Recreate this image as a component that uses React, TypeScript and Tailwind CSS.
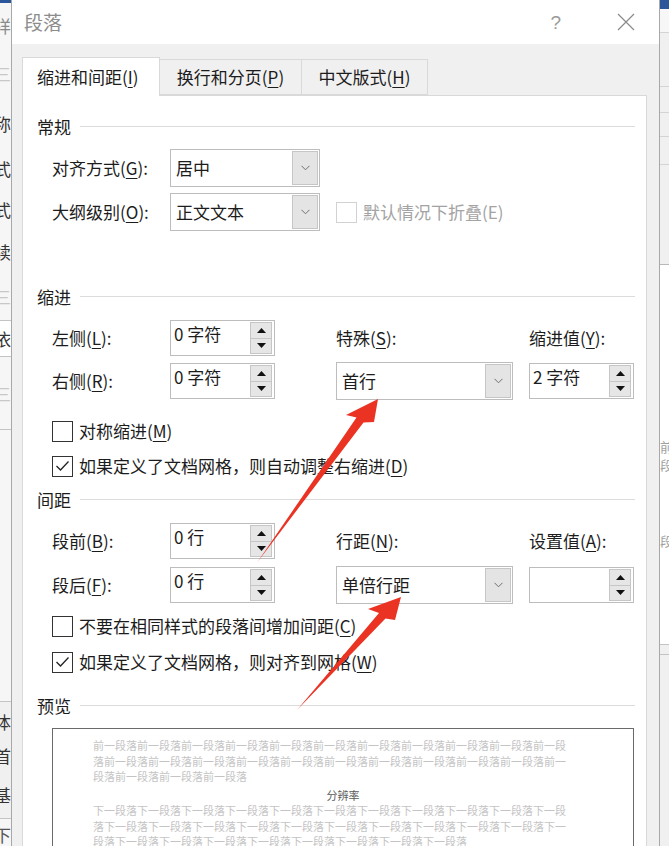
import React from 'react';

function Key({ k }: { k: string }) {
  return <span className="underline decoration-1 underline-offset-[3px]">{k}</span>;
}

function Chevron() {
  return (
    <svg width="9" height="6" viewBox="0 0 9 6">
      <path d="M0.5 0.8 L4.5 4.8 L8.5 0.8" stroke="#6f6f6f" strokeWidth="1" fill="none" />
    </svg>
  );
}

function Select({ value, w }: { value: string; w: string }) {
  return (
    <div className={`flex h-[38px] ${w} shrink-0 border border-[#bdbdbd] bg-white p-px`}>
      <div className="flex flex-1 items-center pl-[4px] text-[17px]">{value}</div>
      <div className="flex w-[26px] items-center justify-center border border-[#c6c6c6] bg-[#e4e4e4]">
        <Chevron />
      </div>
    </div>
  );
}

function Spinner({ value }: { value: string }) {
  return (
    <div className="flex h-[36px] w-[105px] shrink-0 border border-[#bdbdbd] bg-white py-px pr-[2px]">
      <div className="flex-1 pl-[3px] text-[17px] leading-[24px]">{value}</div>
      <div className="flex w-[22px] flex-col">
        <div className="flex flex-1 items-center justify-center border border-[#c6c6c6] bg-[#e6e6e6]">
          <svg width="9" height="5" viewBox="0 0 9 5">
            <path d="M0 5 L4.5 0 L9 5 Z" fill="#111" />
          </svg>
        </div>
        <div className="flex flex-1 items-center justify-center border border-t-0 border-[#c6c6c6] bg-[#e6e6e6]">
          <svg width="9" height="5" viewBox="0 0 9 5">
            <path d="M0 0 L4.5 5 L9 0 Z" fill="#111" />
          </svg>
        </div>
      </div>
    </div>
  );
}

function Check({ checked, disabled }: { checked?: boolean; disabled?: boolean }) {
  return (
    <div
      className={`flex h-[21px] w-[21px] shrink-0 items-center justify-center border bg-white ${
        disabled ? 'border-[#d2d2d2]' : 'border-[#333333]'
      }`}
    >
      {checked && (
        <svg width="15" height="12" viewBox="0 0 15 12">
          <path d="M1.5 6 L5.5 10 L13.5 1.5" stroke="#222" strokeWidth="1.3" fill="none" />
        </svg>
      )}
    </div>
  );
}

function Section({ title }: { title: string }) {
  return (
    <div className="flex h-[24px] items-center gap-[9px] text-[17px]">
      <span className="leading-none">{title}</span>
      <div className="h-px flex-1 bg-[#dcdcdc]" />
    </div>
  );
}

function Peek({ ch, h, c }: { ch: string; h: string; c: string }) {
  return (
    <div className={`flex shrink-0 items-center justify-end overflow-hidden ${h}`}>
      <span className={`shrink-0 text-[17px] leading-none ${c}`}>{ch}</span>
    </div>
  );
}

function PeekR({ ch, h }: { ch: string; h: string }) {
  return (
    <div className={`flex shrink-0 items-center justify-start overflow-hidden bg-white ${h}`}>
      <span className="shrink-0 text-[13px] leading-none text-[#a0a0a0]">{ch}</span>
    </div>
  );
}

export default function App() {
  const before = '前一段落'.repeat(25);
  const after = '下一段落'.repeat(30);

  return (
    <div className="relative flex h-[846px] w-[669px] overflow-hidden bg-white font-['Noto_Sans_CJK_SC',sans-serif] text-[#1c1c1c]">
      {/* word window behind, left edge */}
      <div className="flex w-[12px] shrink-0 flex-col overflow-hidden border-r border-[#a8a8a8] bg-[#f6f6f6]">
        <div className="h-[3px] shrink-0 bg-[#2b579a]" />
        <Peek ch="样" h="h-[45px]" c="text-[#8a8a8a]" />
        <Peek ch="三" h="h-[50px]" c="text-[#c8c8c8]" />
        <Peek ch="称" h="h-[50px]" c="text-[#333]" />
        <Peek ch="式" h="h-[40px]" c="text-[#333]" />
        <Peek ch="式" h="h-[42px]" c="text-[#333]" />
        <Peek ch="续" h="h-[42px]" c="text-[#333]" />
        <Peek ch="三" h="h-[48px]" c="text-[#c8c8c8]" />
        <div className="border-y border-[#c4c4c4] bg-white">
          <Peek ch="依" h="h-[35px]" c="text-[#333]" />
        </div>
        <Peek ch="三" h="h-[72px]" c="text-[#c8c8c8]" />
        <div className="h-[272px] shrink-0 border-t border-[#c4c4c4]" />
        <div className="border-y border-[#c4c4c4] bg-[#f0f0f0]">
          <Peek ch="体" h="h-[38px]" c="text-[#333]" />
          <Peek ch="首" h="h-[30px]" c="text-[#333]" />
          <Peek ch="基" h="h-[48px]" c="text-[#333]" />
        </div>
        <Peek ch="下" h="h-[30px]" c="text-[#555]" />
      </div>

      {/* dialog */}
      <div className="flex min-w-0 flex-1 flex-col">
        <div className="flex h-[44px] shrink-0 items-center bg-white pl-[12px] pr-[24px]">
          <span className="text-[19px] text-[#8c8c8c]">段落</span>
          <div className="flex-1" />
          <span className="mr-[56px] mt-[2px] font-['Liberation_Sans',sans-serif] text-[19px] text-[#9a9a9a]">?</span>
          <svg width="18" height="18" viewBox="0 0 18 18">
            <path d="M1 1 L17 17 M17 1 L1 17" stroke="#8a8a8a" strokeWidth="1.2" />
          </svg>
        </div>

        <div className="flex flex-1 flex-col bg-[#f0f0f0] pl-[10px] pr-[12px] pt-[13px]">
          {/* tabs */}
          <div className="flex h-[38px] items-end text-[17px]">
            <div className="relative z-10 -mb-px flex h-[39px] w-[138px] items-center border border-b-0 border-[#d9d9d9] bg-white pl-[14px]">
              缩进和间距(<Key k="I" />)
            </div>
            <div className="flex h-[36px] w-[142px] items-center justify-center border border-l-0 border-[#d9d9d9] bg-[#f0f0f0]">
              换行和分页(<Key k="P" />)
            </div>
            <div className="flex h-[36px] w-[126px] items-center justify-center border border-l-0 border-[#d9d9d9] bg-[#f0f0f0]">
              中文版式(<Key k="H" />)
            </div>
          </div>

          {/* panel */}
          <div className="flex flex-1 flex-col border border-[#d9d9d9] bg-white pl-[14px] pr-[11px] pt-[18px] text-[17px]">
            <Section title="常规" />
            <div className="mt-[11px] flex items-center pl-[15px]">
              <div className="w-[118px] shrink-0">
                对齐方式(<Key k="G" />):
              </div>
              <Select value="居中" w="w-[150px]" />
            </div>
            <div className="mt-[6px] flex items-center pl-[15px]">
              <div className="w-[118px] shrink-0">
                大纲级别(<Key k="O" />):
              </div>
              <Select value="正文文本" w="w-[150px]" />
              <div className="ml-[16px] flex items-center gap-[6px] text-[#a3a3a3]">
                <Check disabled />
                <span>默认情况下折叠(E)</span>
              </div>
            </div>

            <div className="mt-[53px]">
              <Section title="缩进" />
            </div>
            <div className="mt-[12px] flex h-[36px] items-center pl-[15px]">
              <div className="w-[118px] shrink-0">
                左侧(<Key k="L" />):
              </div>
              <Spinner value="0 字符" />
              <div className="ml-[61px] w-[177px] shrink-0">
                特殊(<Key k="S" />):
              </div>
              <div className="ml-[16px]">
                缩进值(<Key k="Y" />):
              </div>
            </div>
            <div className="mt-[6px] flex h-[38px] items-center pl-[15px]">
              <div className="w-[118px] shrink-0">
                右侧(<Key k="R" />):
              </div>
              <Spinner value="0 字符" />
              <div className="ml-[61px]">
                <Select value="首行" w="w-[177px]" />
              </div>
              <div className="ml-[16px]">
                <Spinner value="2 字符" />
              </div>
            </div>
            <div className="mt-[19px] flex h-[24px] items-center gap-[6px] pl-[15px]">
              <Check />
              <span>
                对称缩进(<Key k="M" />)
              </span>
            </div>
            <div className="mt-[11px] flex h-[24px] items-center gap-[6px] pl-[15px]">
              <Check checked />
              <span>
                如果定义了文档网格，则自动调整右缩进(<Key k="D" />)
              </span>
            </div>

            <div className="mt-[9px]">
              <Section title="间距" />
            </div>
            <div className="mt-[12px] flex h-[36px] items-center pl-[15px]">
              <div className="w-[118px] shrink-0">
                段前(<Key k="B" />):
              </div>
              <Spinner value="0 行" />
              <div className="ml-[61px] w-[177px] shrink-0">
                行距(<Key k="N" />):
              </div>
              <div className="ml-[16px]">
                设置值(<Key k="A" />):
              </div>
            </div>
            <div className="mt-[7px] flex h-[38px] items-center pl-[15px]">
              <div className="w-[118px] shrink-0">
                段后(<Key k="F" />):
              </div>
              <Spinner value="0 行" />
              <div className="ml-[61px]">
                <Select value="单倍行距" w="w-[177px]" />
              </div>
              <div className="ml-[16px]">
                <Spinner value="" />
              </div>
            </div>
            <div className="mt-[10px] flex h-[24px] items-center gap-[6px] pl-[15px]">
              <Check />
              <span>
                不要在相同样式的段落间增加间距(<Key k="C" />)
              </span>
            </div>
            <div className="mt-[12px] flex h-[24px] items-center gap-[6px] pl-[15px]">
              <Check checked />
              <span>
                如果定义了文档网格，则对齐到网格(<Key k="W" />)
              </span>
            </div>

            <div className="mt-[19px]">
              <Section title="预览" />
            </div>
            <div className="ml-[15px] mr-px mt-[11px] h-[160px] shrink-0 border border-[#6a6a6a] bg-white pt-[9px]">
              <div className="ml-[40px] w-[474px] break-all text-[11px] leading-[15.5px] text-[#c4c4c4]">{before}</div>
              <div className="mt-[3px] text-center text-[11px] leading-[15.5px] text-[#5a5a5a]">分辨率</div>
              <div className="ml-[40px] w-[474px] break-all text-[11px] leading-[15.5px] text-[#c4c4c4]">{after}</div>
            </div>
          </div>
        </div>
      </div>

      {/* word window behind, right edge */}
      <div className="flex w-[10px] shrink-0 flex-col overflow-hidden border-l border-[#a8a8a8] bg-[#f0f0f0]">
        <div className="h-[9px] shrink-0 bg-[#2b579a]" />
        <div className="h-[24px] shrink-0 border-b border-[#d4d4d4] bg-[#f7f7f7]" />
        <div className="h-[54px] shrink-0 border-b border-[#d4d4d4]" />
        <div className="h-[26px] shrink-0 border-b border-[#d4d4d4]" />
        <div className="h-[24px] shrink-0 border-b border-[#d4d4d4]" />
        <div className="h-[28px] shrink-0 border-b border-[#d4d4d4]" />
        <div className="h-[100px] shrink-0 border-b border-[#b8b8b8]" />
        <div className="h-[172px] shrink-0 bg-white" />
        <PeekR ch="前" h="h-[18px]" />
        <PeekR ch="段" h="h-[18px]" />
        <div className="h-[58px] shrink-0 bg-white" />
        <PeekR ch="段" h="h-[18px]" />
        <div className="h-[96px] shrink-0 border-b border-[#c4c4c4] bg-white" />
        <div className="h-[10px] shrink-0 border-b border-[#c4c4c4]" />
        <div className="h-[200px] shrink-0" />
      </div>

      {/* red annotation arrows */}
      <svg className="pointer-events-none absolute inset-0" width="669" height="846" viewBox="0 0 669 846">
        <polygon
          points="378,399 374,422 363.5,422.5 257.5,562 356.5,417.5 346,415"
          fill="#ea3323"
        />
        <polygon
          points="401,597 395,620 385.5,618.5 297,710 379,613 368,609"
          fill="#ea3323"
        />
      </svg>
    </div>
  );
}
